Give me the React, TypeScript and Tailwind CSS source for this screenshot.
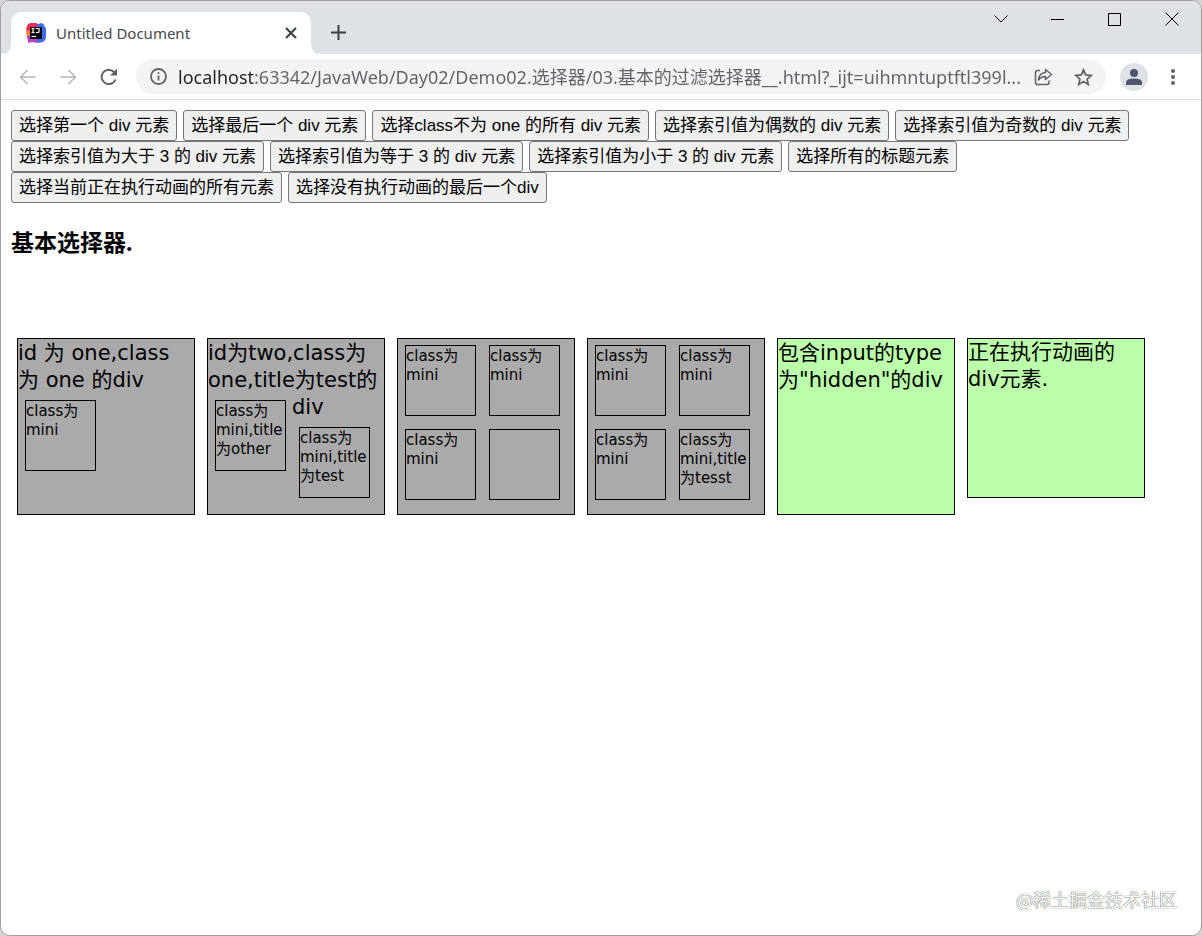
import { FC, ReactNode, useState } from "react";

const rowsOfButtons = [
  [
    "选择第一个 div 元素",
    "选择最后一个 div 元素",
    "选择class不为 one 的所有 div 元素",
    "选择索引值为偶数的 div 元素",
    "选择索引值为奇数的 div 元素",
  ],
  [
    "选择索引值为大于 3 的 div 元素",
    "选择索引值为等于 3 的 div 元素",
    "选择索引值为小于 3 的 div 元素",
    "选择所有的标题元素",
  ],
  ["选择当前正在执行动画的所有元素", "选择没有执行动画的最后一个div"],
];

const pageUrl =
  "localhost:63342/JavaWeb/Day02/Demo02.选择器/03.基本的过滤选择器__.html?_ijt=uihmntuptftl399l...";

const IdeaLogo: FC = () => (
  <svg viewBox="0 0 20 20" className="size-5 shrink-0" aria-hidden="true">
    <path d="M1 3Q2 0 5 0h5q2 0 2 3v7H1Q-.5 6 1 3Z" fill="#ee2d57" />
    <path d="M0 8.5 5 7v7H1.500Q0 11 0 8.500Z" fill="#fb8432" />
    <path d="M11 1.500 15 0q3 .5 3.500 3L20 6v8q0 3-3 5l-5 1-4-3Z" fill="#3f6ce6" />
    <path d="M1 13h6l5 5-2 2-4-1-4 1v-3Q.5 15 1 13Z" fill="#c13fc4" />
    <path d="M4 4h12v12H4Z" fill="#0a0a0a" />
    <path
      d="M5.5 5.5h3M7 5.5v4M5.5 9.5h3M10 5.5h3v3q0 1-1 1h-2"
      stroke="#fff"
      strokeWidth="1.2"
      fill="none"
    />
    <path d="M5.5 13.5H10" stroke="#fff" />
  </svg>
);

const WindowControls: FC = () => (
  <div className="flex items-center self-start text-black">
    <button type="button" aria-label="Search tabs" className="flex h-9 w-[57px] items-center justify-center">
      <svg width="14" height="8" viewBox="0 0 14 8" fill="none" stroke="currentColor">
        <path d="M.5.5 7 7l6.5-6.5" />
      </svg>
    </button>
    <button type="button" aria-label="Minimize" className="flex h-9 w-[57px] items-center justify-center">
      <svg width="13" height="1" viewBox="0 0 13 1">
        <path d="M0 0h13v1H0Z" fill="currentColor" />
      </svg>
    </button>
    <button type="button" aria-label="Maximize" className="flex h-9 w-[57px] items-center justify-center">
      <svg width="13" height="13" viewBox="0 0 13 13" fill="none" stroke="currentColor">
        <path d="M.5.5h12v12H.5Z" />
      </svg>
    </button>
    <button type="button" aria-label="Close" className="flex h-9 w-[58px] items-center justify-center">
      <svg width="14" height="14" viewBox="0 0 14 14" fill="none" stroke="currentColor">
        <path d="M.5.5l13 13M13.5.5l-13 13" />
      </svg>
    </button>
  </div>
);

const TabStrip: FC = () => (
  <div className="flex h-[53px] items-end bg-[#dee1e6]">
    <svg width="10" height="10" viewBox="0 0 10 10" className="shrink-0" aria-hidden="true">
      <path d="M10 0v10H0Q10 10 10 0Z" fill="#fff" />
    </svg>
    <div className="flex h-[42px] w-[300px] items-center rounded-t-[10px] bg-white pl-[15px] pr-3.5">
      <IdeaLogo />
      <span className="ml-2.5 flex-1 font-['Noto_Sans','Open_Sans',sans-serif] text-[15px] text-[#45484c]">
        Untitled Document
      </span>
      <button type="button" aria-label="Close tab">
        <svg width="12" height="12" viewBox="0 0 12 12" stroke="#3c4043" strokeWidth="2">
          <path d="M1 1l10 10M11 1 1 11" />
        </svg>
      </button>
    </div>
    <svg width="10" height="10" viewBox="0 0 10 10" className="shrink-0" aria-hidden="true">
      <path d="M0 0v10h10Q0 10 0 0Z" fill="#fff" />
    </svg>
    <button type="button" aria-label="New tab" className="mb-3.5 ml-2.5">
      <svg width="15" height="15" viewBox="0 0 15 15" stroke="#3c4043" strokeWidth="2">
        <path d="M7.5 0v15M0 7.5h15" />
      </svg>
    </button>
    <div className="flex-1" />
    <WindowControls />
  </div>
);

const Toolbar: FC = () => {
  const [url, setUrl] = useState(pageUrl);

  return (
    <div className="flex h-[46px] items-center border-b border-[#dadce0] bg-white pl-[18px] pr-[26px]">
      <button type="button" aria-label="Back">
        <svg width="17" height="16" viewBox="0 0 17 16" fill="none" stroke="#b5b7ba" strokeWidth="1.6">
          <path d="M16.5 8H2M8.5 1l-7 7 7 7" />
        </svg>
      </button>
      <button type="button" aria-label="Forward" className="ml-6">
        <svg width="17" height="16" viewBox="0 0 17 16" fill="none" stroke="#b5b7ba" strokeWidth="1.6">
          <path d="M.5 8H15M8.5 1l7 7-7 7" />
        </svg>
      </button>
      <button type="button" aria-label="Reload" className="ml-[22px]">
        <svg width="20" height="20" viewBox="0 0 20 20" fill="none" stroke="#5f6368" strokeWidth="2">
          <path d="M16.5 12.5A7.2 7.2 0 1 1 15.500 5.500" />
          <path d="M18 1.5v7h-7Z" fill="#5f6368" stroke="none" />
        </svg>
      </button>

      <div className="ml-[17px] flex h-[35px] flex-1 items-center rounded-full bg-[#f1f3f4] pl-3.5 pr-3">
        <button type="button" aria-label="View site information">
          <svg width="17" height="17" viewBox="0 0 17 17" fill="none" stroke="#5f6368" strokeWidth="1.8">
            <circle cx="8.5" cy="8.5" r="7.5" />
            <path d="M8.5 7.5v5M8.5 4.3v1.8" />
          </svg>
        </button>
        {/* host part is darker than the path */}
        <input
          type="text"
          aria-label="Address"
          value={url}
          onChange={(event) => setUrl(event.target.value)}
          className="ml-[11px] min-w-0 flex-1 bg-[linear-gradient(90deg,#202124_77px,#5f6368_77px)] bg-clip-text font-['Noto_Sans','Noto_Sans_CJK_SC',sans-serif] text-[18px] leading-6 text-transparent caret-black outline-none"
        />
        <button type="button" aria-label="Share" className="ml-2">
          <svg width="19" height="18" viewBox="0 0 19 18" fill="none" stroke="#5f6368" strokeWidth="1.5">
            <path d="M6 2.5H3.5q-2 0-2 2v10q0 2 2 2H13q2 0 2-2v-2" />
            <path d="M11.5 1.5l6 5-6 5v-3Q7 8.5 4.500 12 5 5 11.500 4.500Z" strokeLinejoin="round" />
          </svg>
        </button>
        <button type="button" aria-label="Bookmark" className="ml-[21px] mr-px">
          <svg width="19" height="18" viewBox="0 0 19 18" fill="none" stroke="#5f6368" strokeWidth="1.7">
            <path d="M9.5 1.8l2.2 5.1 5.6.5-4.2 3.7 1.2 5.4-4.8-2.9-4.8 2.9 1.2-5.4-4.2-3.7 5.6-.5Z" />
          </svg>
        </button>
      </div>

      <button
        type="button"
        aria-label="Profile"
        className="ml-3.5 flex size-7 items-center justify-center rounded-full bg-[#dee1e6]"
      >
        <svg width="16" height="16" viewBox="0 0 16 16" fill="#4f566b">
          <circle cx="8" cy="4" r="4" />
          <path d="M0 16v-2.5q0-4 8-4t8 4V16Z" />
        </svg>
      </button>
      <button type="button" aria-label="Menu" className="ml-[23px]">
        <svg width="4" height="16" viewBox="0 0 4 16" fill="#5f6368">
          <circle cx="2" cy="2" r="2" />
          <circle cx="2" cy="8" r="2" />
          <circle cx="2" cy="14" r="2" />
        </svg>
      </button>
    </div>
  );
};

const Mini: FC<{ children?: ReactNode }> = ({ children }) => (
  <div className="float-left mb-[7px] ml-[7px] mr-1.5 mt-1.5 size-[71px] border border-black pt-px text-[15px] leading-[19px]">
    {children}
  </div>
);

const DemoBoxes: FC = () => (
  <div className="flex flex-wrap items-start gap-3 font-['DejaVu_Sans','Noto_Sans_CJK_SC',sans-serif] text-[21px] leading-[27px] text-black">
    <div className="h-[177px] w-[178px] border border-black bg-[#aaaaaa] pt-px">
      id 为 one,class 为 one 的div
      <Mini>class为mini</Mini>
    </div>
    <div className="h-[177px] w-[178px] border border-black bg-[#aaaaaa] pt-px">
      <span>id为two,class为one,title为test的</span>
      <span>div</span>
      <Mini>class为mini,title为other</Mini>
      <Mini>class为mini,title为test</Mini>
    </div>
    <div className="h-[177px] w-[178px] border border-black bg-[#aaaaaa]">
      <Mini>class为mini</Mini>
      <Mini>class为mini</Mini>
      <Mini>class为mini</Mini>
      <Mini />
    </div>
    <div className="h-[177px] w-[178px] border border-black bg-[#aaaaaa]">
      <Mini>class为mini</Mini>
      <Mini>class为mini</Mini>
      <Mini>class为mini</Mini>
      <Mini>class为mini,title为tesst</Mini>
    </div>
    <div className="h-[177px] w-[178px] border border-black bg-[#bbffaa] pt-px">
      包含input的type为"hidden"的div
      <input type="hidden" />
    </div>
    <div className="h-[160px] w-[178px] border border-black bg-[#bbffaa]">
      正在执行动画的div元素.
    </div>
  </div>
);

const App: FC = () => {
  return (
    <div className="min-h-screen bg-[#d4d4d4]">
      <div className="relative flex min-h-screen flex-col overflow-hidden rounded-[10px] border border-[#a0a0a0] bg-white">
        <TabStrip />
        <Toolbar />

        <main className="flex-1 px-2.5 pt-2.5">
          {rowsOfButtons.map((labels) => (
            <div key={labels[0]} className="flex flex-wrap gap-x-1.5">
              {labels.map((label) => (
                <button
                  key={label}
                  type="button"
                  className="h-[31px] rounded-[3px] border border-[#767676] bg-[#efefef] px-[7px] pt-px font-['Liberation_Sans','Noto_Sans_CJK_SC',sans-serif] text-[17px] leading-6 text-black"
                >
                  {label}
                </button>
              ))}
            </div>
          ))}

          <h3 className="mb-20 mt-[23px] font-['Noto_Sans','Noto_Sans_CJK_SC',sans-serif] text-[23px] font-bold leading-8 text-black">
            基本选择器.
          </h3>

          <div className="pl-1.5">
            <DemoBoxes />
          </div>
        </main>

        <span className="absolute bottom-[22px] right-6 font-['Noto_Sans_CJK_SC',sans-serif] text-[18px] leading-7 text-white [text-shadow:0_0_1px_#555,0_0_1px_#777]">
          @稀土掘金技术社区
        </span>
      </div>
    </div>
  );
};

export default App;
